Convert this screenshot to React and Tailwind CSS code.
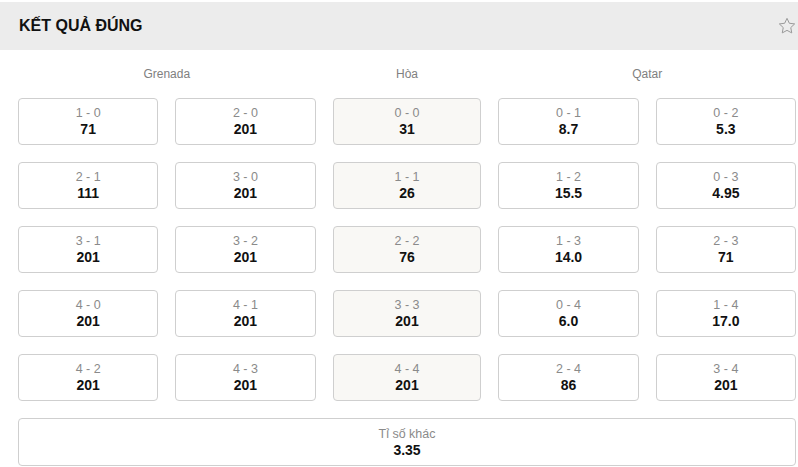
const home = [
  ["1 - 0", "71"], ["2 - 0", "201"],
  ["2 - 1", "111"], ["3 - 0", "201"],
  ["3 - 1", "201"], ["3 - 2", "201"],
  ["4 - 0", "201"], ["4 - 1", "201"],
  ["4 - 2", "201"], ["4 - 3", "201"],
];
const draw = [
  ["0 - 0", "31"], ["1 - 1", "26"], ["2 - 2", "76"], ["3 - 3", "201"], ["4 - 4", "201"],
];
const away = [
  ["0 - 1", "8.7"], ["0 - 2", "5.3"],
  ["1 - 2", "15.5"], ["0 - 3", "4.95"],
  ["1 - 3", "14.0"], ["2 - 3", "71"],
  ["0 - 4", "6.0"], ["1 - 4", "17.0"],
  ["2 - 4", "86"], ["3 - 4", "201"],
];

function Cell({ score, odd, muted }) {
  return (
    <div
      className={`h-[47px] rounded-[4px] border border-[#cfcfcf] flex flex-col items-center justify-center cursor-pointer ${
        muted ? "bg-[#f9f8f5]" : "bg-white"
      }`}
    >
      <span className="text-[12.5px] leading-[15px] text-[#8a8a8a]">{score}</span>
      <span className="text-[14px] leading-[16px] font-bold text-[#111]">{odd}</span>
    </div>
  );
}

function Group({ label, items, cols, muted }) {
  return (
    <div className="flex flex-col">
      <div className="h-[48px] flex items-center justify-center text-[12px] text-[#808080]">
        {label}
      </div>
      <div className={`grid ${cols === 2 ? "grid-cols-2" : "grid-cols-1"} gap-x-[17px] gap-y-[17px]`}>
        {items.map(([s, o]) => (
          <Cell key={s} score={s} odd={o} muted={muted} />
        ))}
      </div>
    </div>
  );
}

export default function App() {
  return (
    <div className="w-[798px] h-[467px] bg-white overflow-hidden" style={{ fontFamily: '"Liberation Sans", Arial, sans-serif' }}>
      <div className="mt-[2px] h-[48px] bg-[#ececec] flex items-center justify-between pl-[19px] pr-[1px]">
        <h2 className="text-[16px] font-bold text-[#111]">KẾT QUẢ ĐÚNG</h2>
        <svg width="20" height="20" viewBox="0 0 24 24" fill="none" stroke="#9a9a9a" strokeWidth="1.2" strokeLinejoin="round">
          <path d="M12 2.8l2.8 5.9 6.4.8-4.7 4.4 1.2 6.4L12 17.2l-5.7 3.1 1.2-6.4-4.7-4.4 6.4-.8z" />
        </svg>
      </div>
      <div className="px-[18px] pr-[2px]">
        <div className="grid grid-cols-[2fr_1fr_2fr] gap-x-[17px]">
          <Group label="Grenada" items={home} cols={2} />
          <Group label="Hòa" items={draw} cols={1} muted />
          <Group label="Qatar" items={away} cols={2} />
        </div>
        <div className="mt-[17px] h-[48px] rounded-[4px] border border-[#cfcfcf] flex flex-col items-center justify-center">
          <span className="text-[12.5px] leading-[15px] text-[#8a8a8a]">Tỉ số khác</span>
          <span className="text-[14px] leading-[16px] font-bold text-[#111]">3.35</span>
        </div>
      </div>
    </div>
  );
}
